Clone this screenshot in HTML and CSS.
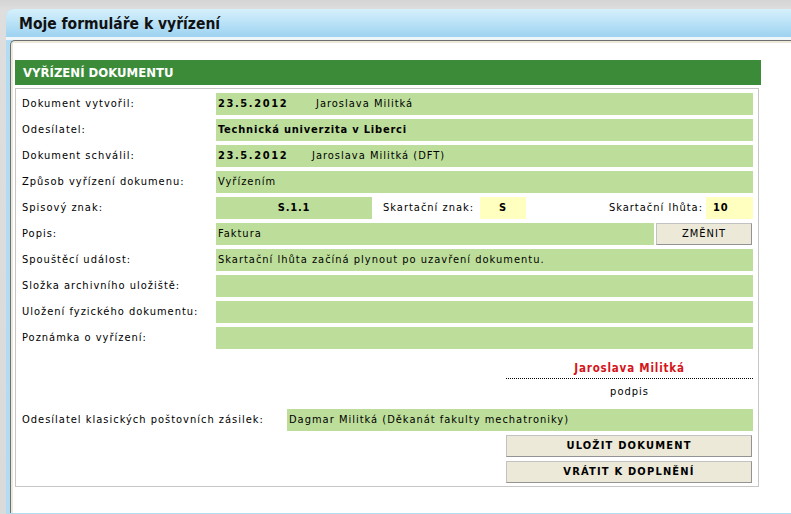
FILE: index.html
```html
<!DOCTYPE html>
<html lang="cs">
<head>
<meta charset="utf-8">
<title>Moje formuláře k vyřízení</title>
<link rel="stylesheet" href="styles.css">
</head>
<body>
<div class="window">
  <div class="titlebar"><h1 class="title">Moje formuláře k vyřízení</h1></div>
  <div class="panel">
    <div class="panel-inner">
      <h2 class="section-head">VYŘÍZENÍ DOKUMENTU</h2>
      <div class="formbox">
        <div class="grid">
          <div class="lbl">Dokument vytvořil:</div>
          <div class="fld"><span class="date">23.5.2012</span><span class="name gap">Jaroslava Militká</span></div>

          <div class="lbl">Odesílatel:</div>
          <div class="fld strong">Technická univerzita v Liberci</div>

          <div class="lbl">Dokument schválil:</div>
          <div class="fld"><span class="date">23.5.2012</span><span class="name">Jaroslava Militká (DFT)</span></div>

          <div class="lbl">Způsob vyřízení dokumenu:</div>
          <div class="fld">Vyřízením</div>

          <div class="lbl">Spisový znak:</div>
          <div class="fld-plain">
            <div class="cell-green strong">S.1.1</div>
            <div class="inline-lbl">Skartační znak:</div>
            <div class="cell-yellow strong center">S</div>
            <div class="inline-lbl right">Skartační lhůta:</div>
            <div class="cell-yellow wide strong">10</div>
          </div>

          <div class="lbl">Popis:</div>
          <div class="fld-plain">
            <div class="cell-green grow">Faktura</div>
            <button class="btn btn-small">ZMĚNIT</button>
          </div>

          <div class="lbl">Spouštěcí událost:</div>
          <div class="fld">Skartační lhůta začíná plynout po uzavření dokumentu.</div>

          <div class="lbl">Složka archivního uložiště:</div>
          <div class="fld"></div>

          <div class="lbl">Uložení fyzického dokumentu:</div>
          <div class="fld"></div>

          <div class="lbl">Poznámka o vyřízení:</div>
          <div class="fld"></div>
        </div>

        <div class="signature">
          <div class="sig-name">Jaroslava Militká</div>
          <div class="sig-cap">podpis</div>
        </div>

        <div class="grid grid-wide">
          <div class="lbl">Odesílatel klasických poštovních zásilek:</div>
          <div class="fld">Dagmar Militká (Děkanát fakulty mechatroniky)</div>
        </div>

        <div class="actions">
          <button class="btn btn-bold">ULOŽIT DOKUMENT</button>
          <button class="btn btn-bold">VRÁTIT K DOPLNĚNÍ</button>
        </div>
      </div>
    </div>
  </div>
</div>
</body>
</html>
```
FILE: styles.css
```css
html, body {
  margin: 0;
  padding: 0;
}
body {
  background: linear-gradient(#d4d4d4, #dedede 10px, #dadada);
  width: 791px;
  height: 514px;
  overflow: hidden;
  font-family: "DejaVu Sans Condensed", "DejaVu Sans", sans-serif;
  font-size: 11px;
  color: #000;
}
.window {
  margin: 9px 0 0 6px;
  background: #b2dcf1;
  border-top-left-radius: 8px;
  height: 505px;
}
.titlebar {
  height: 28px;
  border-bottom: 3px solid #eef6fa;
  border-top-left-radius: 8px;
  background: linear-gradient(#d6f0fc, #bfe5f8 40%, #9dd2f0);
  padding-left: 13px;
  display: flex;
  align-items: center;
}
.title {
  margin: 0;
  font-family: "DejaVu Sans Condensed", "DejaVu Sans", sans-serif;
  font-weight: bold;
  font-size: 15.5px;
  color: #111;
  line-height: 28px;
  padding-top: 1px;
}
.panel {
  margin-left: 4px;
  border-top: 1px solid #6f6f6f;
  border-left: 1px solid #6f6f6f;
  border-top-left-radius: 5px;
  background: #ece9d8;
  padding: 2px 0 0 2px;
  height: 470px;
}
.panel-inner {
  background: #fff;
  padding: 17px 0 0 2px;
  height: 453px;
}
.section-head {
  margin: 0 0 3px;
  width: 746px;
  box-sizing: border-box;
  height: 25px;
  line-height: 25px;
  background: #3b8b39;
  color: #fff;
  font-weight: bold;
  font-size: 13px;
  padding-left: 8px;
}
.formbox {
  width: 744px;
  box-sizing: border-box;
  border: 1px solid #c6c6c6;
  padding: 4px 5px 3px 0;
}
.grid {
  display: grid;
  grid-template-columns: 200px 1fr;
  grid-auto-rows: 22px;
  row-gap: 4px;
}
.grid-wide {
  grid-template-columns: 271px 1fr;
  margin-top: 9px;
}
.lbl {
  padding-left: 6px;
  line-height: 22px;
  letter-spacing: 1px;
  white-space: nowrap;
}
.fld {
  background: #bcde9a;
  padding-left: 2px;
  line-height: 22px;
  letter-spacing: 1px;
  display: flex;
  white-space: nowrap;
}
.strong {
  font-weight: bold;
  letter-spacing: 0.8px;
}
.date {
  font-weight: bold;
  letter-spacing: 1.6px;
  width: 94px;
}
.gap {
  margin-left: 4px;
}
.fld-plain {
  display: flex;
  line-height: 22px;
  letter-spacing: 1px;
  white-space: nowrap;
}
.cell-green {
  background: #bcde9a;
  width: 156px;
  text-align: center;
}
.cell-green.grow {
  flex: 1;
  width: auto;
  text-align: left;
  padding-left: 2px;
}
.inline-lbl {
  width: 97px;
  padding-left: 11px;
}
.inline-lbl.right {
  flex: 1;
  width: auto;
  padding-left: 0;
  padding-right: 3px;
  text-align: right;
}
.cell-yellow {
  background: #ffffbf;
  width: 46px;
}
.cell-yellow.center {
  text-align: center;
}
.cell-yellow.wide {
  width: 47px;
  padding-left: 7px;
  box-sizing: border-box;
}
.btn {
  font-family: "DejaVu Sans Condensed", "DejaVu Sans", sans-serif;
  background: #ece9d8;
  border: 1px solid;
  border-color: #c2c2c2 #939393 #939393 #c2c2c2;
  color: #000;
  padding: 0;
  margin: 0;
  height: 22px;
  font-size: 11px;
  line-height: 20px;
}
.btn-small {
  width: 96px;
  margin-left: 2px;
  margin-right: 1px;
  letter-spacing: 1px;
}
.btn-bold {
  font-weight: bold;
  letter-spacing: 1.2px;
  height: 22px;
}
.signature {
  margin: 11px 0 0 auto;
  width: 247px;
  text-align: center;
}
.sig-name {
  color: #d4151b;
  font-weight: bold;
  font-size: 11.5px;
  letter-spacing: 0.8px;
  line-height: 16px;
  padding-bottom: 2px;
  border-bottom: 1px dotted #000;
}
.sig-cap {
  margin-top: 5px;
  line-height: 16px;
  letter-spacing: 1px;
}
.actions {
  margin: 4px 1px 0 auto;
  width: 246px;
  display: flex;
  flex-direction: column;
  gap: 4px;
}
```
